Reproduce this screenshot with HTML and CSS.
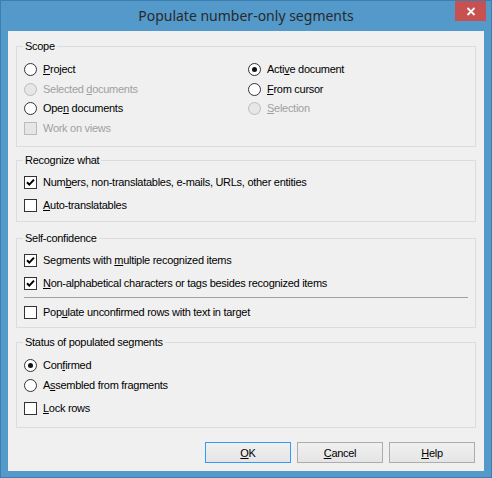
FILE: index.html
```html
<!DOCTYPE html>
<html lang="en">
<head>
<meta charset="utf-8">
<title>Populate number-only segments</title>
<link rel="stylesheet" href="styles.css">
</head>
<body>
<div class="window">
  <div class="titlebar">
    <div class="title">Populate number-only segments</div>
    <div class="close">
      <svg width="10" height="9" viewBox="0 0 10 9"><path d="M1.5 1 L8.5 8 M8.5 1 L1.5 8" stroke="#fff" stroke-width="1.8" fill="none"/></svg>
    </div>
  </div>
  <div class="client">
    <div class="group scope">
      <div class="group-title">Scope</div>
      <div class="scope-grid">
        <label class="opt"><span class="radio"></span><span><u>P</u>roject</span></label>
        <label class="opt"><span class="radio checked"></span><span>Acti<u>v</u>e document</span></label>
        <label class="opt disabled"><span class="radio"></span><span>Selected <u>d</u>ocuments</span></label>
        <label class="opt"><span class="radio"></span><span><u>F</u>rom cursor</span></label>
        <label class="opt"><span class="radio"></span><span>Ope<u>n</u> documents</span></label>
        <label class="opt disabled"><span class="radio"></span><span><u>S</u>election</span></label>
        <label class="opt disabled"><span class="check"></span><span>Work on views</span></label>
      </div>
    </div>

    <div class="group recognize">
      <div class="group-title">Recognize what</div>
      <div class="rows">
        <label class="opt"><span class="check checked"><svg width="11" height="11" viewBox="0 0 11 11"><path d="M2 5.2 L4.3 7.6 L9 2.6" stroke="#000" stroke-width="2" fill="none"/></svg></span><span>Num<u>b</u>ers, non-translatables, e-mails, URLs, other entities</span></label>
        <label class="opt"><span class="check"></span><span><u>A</u>uto-translatables</span></label>
      </div>
    </div>

    <div class="group confidence">
      <div class="group-title">Self-confidence</div>
      <div class="rows">
        <label class="opt"><span class="check checked"><svg width="11" height="11" viewBox="0 0 11 11"><path d="M2 5.2 L4.3 7.6 L9 2.6" stroke="#000" stroke-width="2" fill="none"/></svg></span><span>Segments with <u>m</u>ultiple recognized items</span></label>
        <label class="opt"><span class="check checked"><svg width="11" height="11" viewBox="0 0 11 11"><path d="M2 5.2 L4.3 7.6 L9 2.6" stroke="#000" stroke-width="2" fill="none"/></svg></span><span><u>N</u>on-alphabetical characters or tags besides recognized items</span></label>
      </div>
      <div class="separator"></div>
      <label class="opt after-sep"><span class="check"></span><span>Pop<u>u</u>late unconfirmed rows with text in target</span></label>
    </div>

    <div class="group status">
      <div class="group-title">Status of populated segments</div>
      <div class="status-rows">
        <label class="opt"><span class="radio checked"></span><span>Con<u>f</u>irmed</span></label>
        <label class="opt"><span class="radio"></span><span>A<u>s</u>sembled from fragments</span></label>
        <label class="opt lock"><span class="check"></span><span><u>L</u>ock rows</span></label>
      </div>
    </div>

    <div class="buttons">
      <button class="btn default"><u>O</u>K</button>
      <button class="btn"><u>C</u>ancel</button>
      <button class="btn"><u>H</u>elp</button>
    </div>
  </div>
</div>
</body>
</html>
```

FILE: styles.css
```css
* { box-sizing: border-box; }

html, body {
  margin: 0;
  padding: 0;
}

body {
  width: 492px;
  height: 478px;
  overflow: hidden;
  font-family: "Liberation Sans", Arial, sans-serif;
  font-size: 11px;
  letter-spacing: -0.28px;
  color: #000;
}

.window {
  width: 492px;
  height: 478px;
  background: #5399ca;
  border: 1px solid #3d7eaf;
  display: flex;
  flex-direction: column;
}

.titlebar {
  height: 30px;
  flex: none;
  display: grid;
  grid-template-columns: 1fr auto 1fr;
  align-items: start;
}

.title {
  grid-column: 2;
  font-family: "Noto Sans", sans-serif;
  font-size: 14px;
  letter-spacing: 0;
  line-height: 29px;
  color: #2a2a2a;
  white-space: nowrap;
}

.close {
  grid-column: 3;
  justify-self: end;
  margin-right: 5px;
  width: 31px;
  height: 20px;
  background: #c75050;
  display: flex;
  align-items: center;
  justify-content: center;
}

.close svg { display: block; }

.client {
  flex: 1;
  margin: 0 7px 6px;
  background: #f0f0f0;
  padding: 15px 8px 0;
  display: flex;
  flex-direction: column;
}

.group {
  border: 1px solid #dcdcdc;
  padding: 0 7px;
}

.group-title {
  width: max-content;
  height: 14px;
  line-height: 14px;
  margin: -8px 0 0 -1px;
  padding: 0 2px;
  background: #f0f0f0;
}

.opt {
  display: flex;
  align-items: center;
  gap: 6px;
  height: 16px;
  line-height: 16px;
  white-space: nowrap;
}

.opt.disabled { color: #a0a0a0; }

.radio {
  flex: none;
  width: 13px;
  height: 13px;
  border: 1px solid #333;
  border-radius: 50%;
  background: #fff;
  display: flex;
  align-items: center;
  justify-content: center;
}

.radio.checked::after {
  content: "";
  width: 5px;
  height: 5px;
  border-radius: 50%;
  background: #111;
}

.check {
  flex: none;
  width: 13px;
  height: 13px;
  border: 1px solid #333;
  background: #fff;
}

.check svg { display: block; }

.disabled .radio,
.disabled .check {
  border-color: #bcbcbc;
  background: #e6e6e6;
}

u { text-underline-offset: 1px; }

/* Scope */
.scope { padding-bottom: 10px; }

.scope-grid {
  margin-top: 8px;
  display: grid;
  grid-template-columns: 224px 1fr;
  grid-template-rows: 20px 19px 20px 16px;
}

.scope-grid > .opt { align-self: start; }

/* Recognize what */
.recognize {
  margin-top: 13px;
  padding-bottom: 8px;
}

.rows {
  margin-top: 7px;
  display: flex;
  flex-direction: column;
  gap: 7px;
}

/* Self-confidence */
.confidence {
  margin-top: 16px;
  padding-bottom: 7px;
}

.separator {
  margin-top: 6px;
  height: 1px;
  background: #a0a0a0;
}

.after-sep { margin-top: 6px; }

/* Status */
.status {
  margin-top: 14px;
  padding-bottom: 11px;
}

.status-rows {
  margin-top: 8px;
  display: flex;
  flex-direction: column;
  gap: 4px;
}

.status-rows .lock { margin-top: 3px; }

/* Buttons */
.buttons {
  margin-top: 14px;
  margin-right: 1px;
  display: flex;
  justify-content: flex-end;
  gap: 6px;
}

.btn {
  width: 86px;
  height: 21px;
  padding: 0;
  border: 1px solid #acacac;
  background: linear-gradient(#f0f0f0, #e5e5e5);
  font-family: inherit;
  font-size: 11px;
  letter-spacing: -0.28px;
  color: #000;
}

.btn.default { border-color: #3399ff; }
```
